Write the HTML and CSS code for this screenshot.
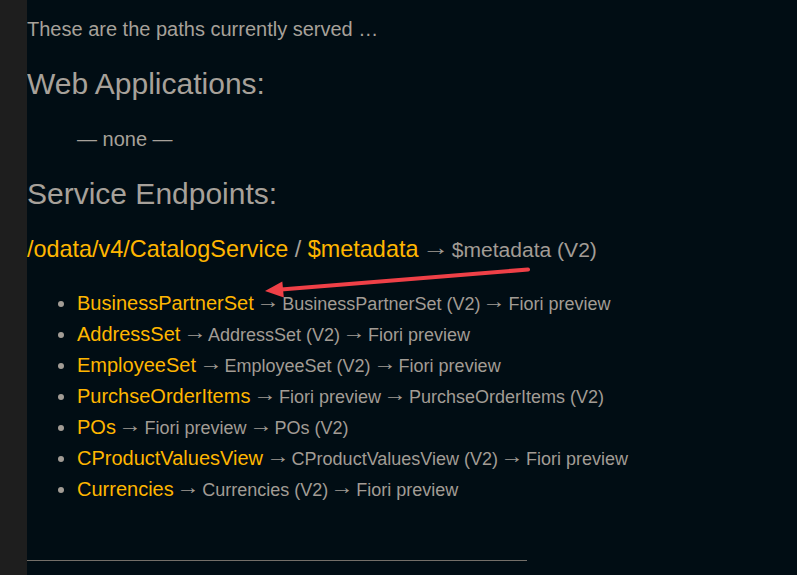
FILE: index.html
```html
<!DOCTYPE html>
<html lang="en">
<head>
<meta charset="utf-8">
<title>Paths</title>
<link rel="stylesheet" href="styles.css">
</head>
<body>
<div class="page">
  <aside class="gutter"></aside>
  <main class="content">
    <p class="intro">These are the paths currently served …</p>
    <h2 class="section web">Web Applications:</h2>
    <ul class="none-list"><li>— none —</li></ul>
    <h2 class="section svc">Service Endpoints:</h2>
    <h3 class="service"><a href="#">/odata/v4/CatalogService</a> / <a href="#">$metadata</a> <span class="alt"><span class="arr">→</span> $metadata (V2)</span></h3>
    <ul class="entities">
      <li><a href="#">BusinessPartnerSet</a> <span class="alt"><span class="arr">→</span> BusinessPartnerSet (V2) <span class="arr">→</span> Fiori preview</span></li>
      <li><a href="#">AddressSet</a> <span class="alt"><span class="arr">→</span> AddressSet (V2) <span class="arr">→</span> Fiori preview</span></li>
      <li><a href="#">EmployeeSet</a> <span class="alt"><span class="arr">→</span> EmployeeSet (V2) <span class="arr">→</span> Fiori preview</span></li>
      <li><a href="#">PurchseOrderItems</a> <span class="alt"><span class="arr">→</span> Fiori preview <span class="arr">→</span> PurchseOrderItems (V2)</span></li>
      <li><a href="#">POs</a> <span class="alt"><span class="arr">→</span> Fiori preview <span class="arr">→</span> POs (V2)</span></li>
      <li><a href="#">CProductValuesView</a> <span class="alt"><span class="arr">→</span> CProductValuesView (V2) <span class="arr">→</span> Fiori preview</span></li>
      <li><a href="#">Currencies</a> <span class="alt"><span class="arr">→</span> Currencies (V2) <span class="arr">→</span> Fiori preview</span></li>
    </ul>
    <hr class="rule">
  </main>
</div>
<svg class="annotation" width="797" height="575" viewBox="0 0 797 575" aria-hidden="true">
  <line x1="528" y1="269.5" x2="281" y2="289.6" stroke="#ef4047" stroke-width="4" stroke-linecap="round"/>
  <polygon points="265,291 282.3,281.4 283.8,297.6" fill="#ef4047"/>
</svg>
</body>
</html>
```
FILE: styles.css
```css
html, body {
  margin: 0;
  padding: 0;
  height: 100%;
  overflow: hidden;
}

body {
  background: #010d14;
  font-family: "Liberation Sans", Arial, sans-serif;
  color: #a7a19a;
  font-size: 20px;
}

.page {
  display: flex;
  height: 100%;
}

.gutter {
  width: 27px;
  flex: none;
  background: #1e1e1e;
}

.content {
  flex: 1;
  background: #010d14;
  overflow: hidden;
}

a {
  color: #ffb600;
  text-decoration: none;
}

.intro {
  margin: 18px 0 0;
  font-size: 20px;
}

.section {
  font-size: 30px;
  font-weight: normal;
  margin: 0;
}

.web {
  margin-top: 26px;
}

.svc {
  margin-top: 26px;
}

.none-list {
  list-style: none;
  margin: 27px 0 0;
  padding-left: 50px;
}

.service {
  font-size: 23.4px;
  font-weight: normal;
  margin: 25px 0 0;
}

.alt {
  font-size: 0.9em;
  color: #a29c95;
}

.arr {
  display: inline-block;
  transform: translateY(-0.12em) scale(1.3, 1.1);
}

.entities {
  margin: 25px 0 0;
  padding-left: 50px;
}

.entities li {
  line-height: 31px;
}

.entities .alt {
  line-height: 1;
}

.entities li::marker {
  color: #a29c95;
}

.rule {
  width: 500px;
  margin: 55px 0 0;
  border: 0;
  border-top: 1px solid #746f69;
  height: 0;
}

.annotation {
  position: absolute;
  left: 0;
  top: 0;
  pointer-events: none;
}
```
